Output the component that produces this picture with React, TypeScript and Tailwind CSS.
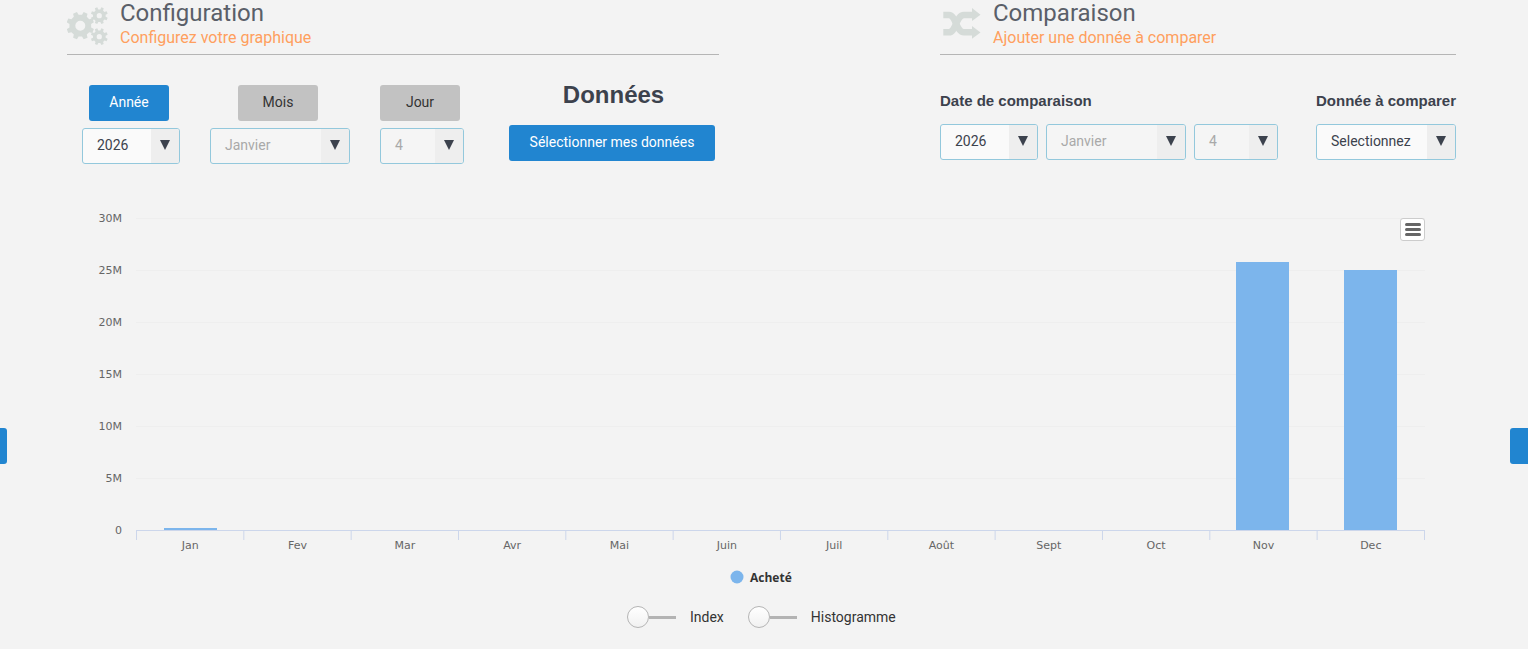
import type { ReactNode } from "react";

const months = ["Jan", "Fev", "Mar", "Avr", "Mai", "Juin", "Juil", "Août", "Sept", "Oct", "Nov", "Dec"];
const yLabels = ["30M", "25M", "20M", "15M", "10M", "5M", "0"];
const bars = [
  { x: 164, top: 328 },
  { x: 1236, top: 62 },
  { x: 1344, top: 70 },
];

// outline of one gear, hole cut out with evenodd
function gearPath(cx: number, cy: number, outer: number, root: number, hole: number, teeth: number) {
  const step = (Math.PI * 2) / teeth;
  const pts: string[] = [];
  for (let i = 0; i < teeth; i++) {
    const a = i * step + step / 2;
    const p = (r: number, d: number) => `${(cx + Math.cos(a + d) * r).toFixed(2)} ${(cy + Math.sin(a + d) * r).toFixed(2)}`;
    pts.push(p(root, -step * 0.3), p(outer, -step * 0.19), p(outer, step * 0.19), p(root, step * 0.3));
  }
  return `M${pts.join("L")}Z M${cx - hole} ${cy}a${hole} ${hole} 0 1 0 ${hole * 2} 0a${hole} ${hole} 0 1 0 ${-hole * 2} 0Z`;
}

function GearsIcon() {
  return (
    <svg width="45" height="46" viewBox="5 0 45 46" className="fill-[#d5dbd8]">
      <path fillRule="evenodd" d={gearPath(18.3, 21.7, 14, 11, 5, 8)} />
      <path fillRule="evenodd" d={gearPath(37.3, 11.7, 8.6, 6.4, 2.6, 8)} />
      <path fillRule="evenodd" d={gearPath(37.3, 32.7, 8.6, 6.4, 2.6, 8)} />
    </svg>
  );
}

function ShuffleIcon() {
  return (
    <svg width="45" height="46" viewBox="4 0 45 46" className="fill-[#d5dbd8]">
      <path d="M7.3 11H13C20 11 20 28.3 28 28.3H37" fill="none" stroke="#d5dbd8" strokeWidth="6.5" />
      <path d="M7.3 28.3H13C20 28.3 20 11 28 11H37" fill="none" stroke="#d5dbd8" strokeWidth="6.5" />
      <polygon points="36,4 44.5,10.8 36,17" />
      <polygon points="36,22 44.5,28.4 36,34.8" />
    </svg>
  );
}

function Arrow() {
  return (
    <svg width="10" height="10" viewBox="0 0 10 10" className="fill-[#3c424d]">
      <polygon points="0,0 10,0 5,10" />
    </svg>
  );
}

function Select({ value, width, disabled }: { value: string; width: string; disabled?: boolean }) {
  return (
    <div
      className={`flex h-9 items-stretch overflow-hidden rounded-[3px] border border-[#93c8dc] text-sm ${width} ${
        disabled ? "bg-[#f5f5f5] text-[#a9a9a9]" : "bg-[#fafafa] text-[#3c424d]"
      }`}
    >
      <span className="flex flex-1 items-center pb-[2px] pl-[14px]">{value}</span>
      <span className="flex w-[28px] items-start justify-center bg-[#eeeeee] pt-[11px]">
        <Arrow />
      </span>
    </div>
  );
}

function TabButton({ label, active, className }: { label: string; active?: boolean; className: string }) {
  return (
    <button
      className={`flex h-9 w-20 items-center justify-center rounded-[3px] pb-[2px] text-sm ${className} ${
        active ? "bg-[#2185d0] text-white" : "bg-[#c2c2c2] text-[#333333]"
      }`}
    >
      {label}
    </button>
  );
}

function SectionHeader({ icon, title, subtitle }: { icon: ReactNode; title: string; subtitle: string }) {
  return (
    <div className="flex h-[55px] items-start border-b border-[#b5b5b5]">
      <div className="w-[53px] pt-[4px]">{icon}</div>
      <div>
        <div className="text-2xl leading-[26px] text-[#5a5f69]">{title}</div>
        <div className="mt-[1px] text-base leading-[21px] text-[#ff9f5e]">{subtitle}</div>
      </div>
    </div>
  );
}

function Toggle({ label, className }: { label: string; className: string }) {
  return (
    <div className={`flex items-center ${className}`}>
      <div className="flex w-[49px] items-center">
        <span className="h-[22px] w-[22px] rounded-full border border-[#b5b5b5] bg-gradient-to-b from-white to-[#f1f1f1]" />
        <span className="h-[3px] flex-1 bg-[#b3b3b3]" />
      </div>
      <span className="ml-[14px] text-sm text-[#333333]">{label}</span>
    </div>
  );
}

function Chart() {
  const left = 136;
  const step = 107.33;
  return (
    <svg width="1528" height="400" viewBox="0 0 1528 400" className="block">
      {yLabels.map((label, i) => {
        const y = 18 + i * 52;
        return (
          <g key={label}>
            {i < 6 && <line x1={left} x2="1425" y1={y + 0.5} y2={y + 0.5} stroke="#eeeeee" />}
            <text x="122" y={y + 4} textAnchor="end" fontSize="11" fill="#666666" fontFamily="'DejaVu Sans', sans-serif">
              {label}
            </text>
          </g>
        );
      })}
      {bars.map((bar) => (
        <rect key={bar.x} x={bar.x} y={bar.top} width="53" height={330 - bar.top} fill="#7cb5ec" />
      ))}
      <line x1={left} x2="1425" y1="330.5" y2="330.5" stroke="#ccd6eb" />
      {months.map((month, i) => (
        <g key={month}>
          <line x1={left + i * step + 0.5} x2={left + i * step + 0.5} y1="330" y2="340" stroke="#ccd6eb" />
          <text
            x={left + 0.5 + (i + 0.5) * step}
            y="349"
            textAnchor="middle"
            fontSize="11"
            fill="#666666"
            fontFamily="'DejaVu Sans', sans-serif"
          >
            {month}
          </text>
        </g>
      ))}
      <line x1="1424.5" x2="1424.5" y1="330" y2="340" stroke="#ccd6eb" />
      <circle cx="737" cy="377" r="6.5" fill="#7cb5ec" />
      <text x="750" y="382" fontSize="12" fontWeight="700" fill="#333333" fontFamily="'Open Sans', sans-serif">
        Acheté
      </text>
    </svg>
  );
}

export default function App() {
  return (
    <div className="relative h-[649px] overflow-hidden bg-[#f3f3f3] font-['Roboto',sans-serif]">
      <div className="flex h-[200px] pl-[67px]">
        {/* Configuration */}
        <div className="w-[652px]">
          <SectionHeader icon={<GearsIcon />} title="Configuration" subtitle="Configurez votre graphique" />
          <div className="mt-[30px] flex pl-[15px]">
            <div className="w-[98px]">
              <TabButton label="Année" active className="ml-[7px]" />
              <div className="mt-[7px]">
                <Select value="2026" width="w-[98px]" />
              </div>
            </div>
            <div className="ml-[30px] w-[140px]">
              <TabButton label="Mois" className="ml-[28px]" />
              <div className="mt-[7px]">
                <Select value="Janvier" width="w-[140px]" disabled />
              </div>
            </div>
            <div className="ml-[30px] w-[84px]">
              <TabButton label="Jour" className="" />
              <div className="mt-[7px]">
                <Select value="4" width="w-[84px]" disabled />
              </div>
            </div>
            <div className="ml-[45px] flex w-[206px] flex-col items-center">
              <h2 className="h-[40px] pl-[3px] font-['Liberation_Sans',sans-serif] text-2xl leading-[20px] font-bold text-[#3c424d]">
                Données
              </h2>
              <button className="h-9 w-full rounded-[3px] bg-[#2185d0] pb-[2px] text-sm text-white">
                Sélectionner mes données
              </button>
            </div>
          </div>
        </div>

        {/* Comparaison */}
        <div className="ml-[221px] w-[516px]">
          <SectionHeader icon={<ShuffleIcon />} title="Comparaison" subtitle="Ajouter une donnée à comparer" />
          <div className="mt-[36px] flex justify-between">
            <div>
              <div className="h-5 font-['Liberation_Sans',sans-serif] text-[15px] leading-5 font-bold text-[#3c424d]">
                Date de comparaison
              </div>
              <div className="mt-[13px] flex gap-2">
                <Select value="2026" width="w-[98px]" />
                <Select value="Janvier" width="w-[140px]" disabled />
                <Select value="4" width="w-[84px]" disabled />
              </div>
            </div>
            <div className="w-[140px]">
              <div className="h-5 font-['Liberation_Sans',sans-serif] text-[15px] leading-5 font-bold whitespace-nowrap text-[#3c424d]">
                Donnée à comparer
              </div>
              <div className="mt-[13px]">
                <Select value="Selectionnez" width="w-[140px]" />
              </div>
            </div>
          </div>
        </div>
      </div>

      <div className="relative">
        <Chart />
        <button className="absolute top-[18px] left-[1400px] flex h-[23px] w-[25px] flex-col items-center justify-center gap-[2px] rounded-[3px] border border-[#cccccc] bg-white">
          <span className="h-[3px] w-[16px] rounded-sm bg-[#666666]" />
          <span className="h-[3px] w-[16px] rounded-sm bg-[#666666]" />
          <span className="h-[3px] w-[16px] rounded-sm bg-[#666666]" />
        </button>
      </div>

      <div className="mt-[6px] flex pl-[627px]">
        <Toggle label="Index" className="" />
        <Toggle label="Histogramme" className="ml-[24px]" />
      </div>

      {/* side tabs */}
      <div className="absolute top-[428px] left-0 h-9 w-[7px] rounded-r-[3px] bg-[#2185d0]" />
      <div className="absolute top-[428px] right-0 h-9 w-[18px] rounded-l-[3px] bg-[#2185d0]" />
    </div>
  );
}
